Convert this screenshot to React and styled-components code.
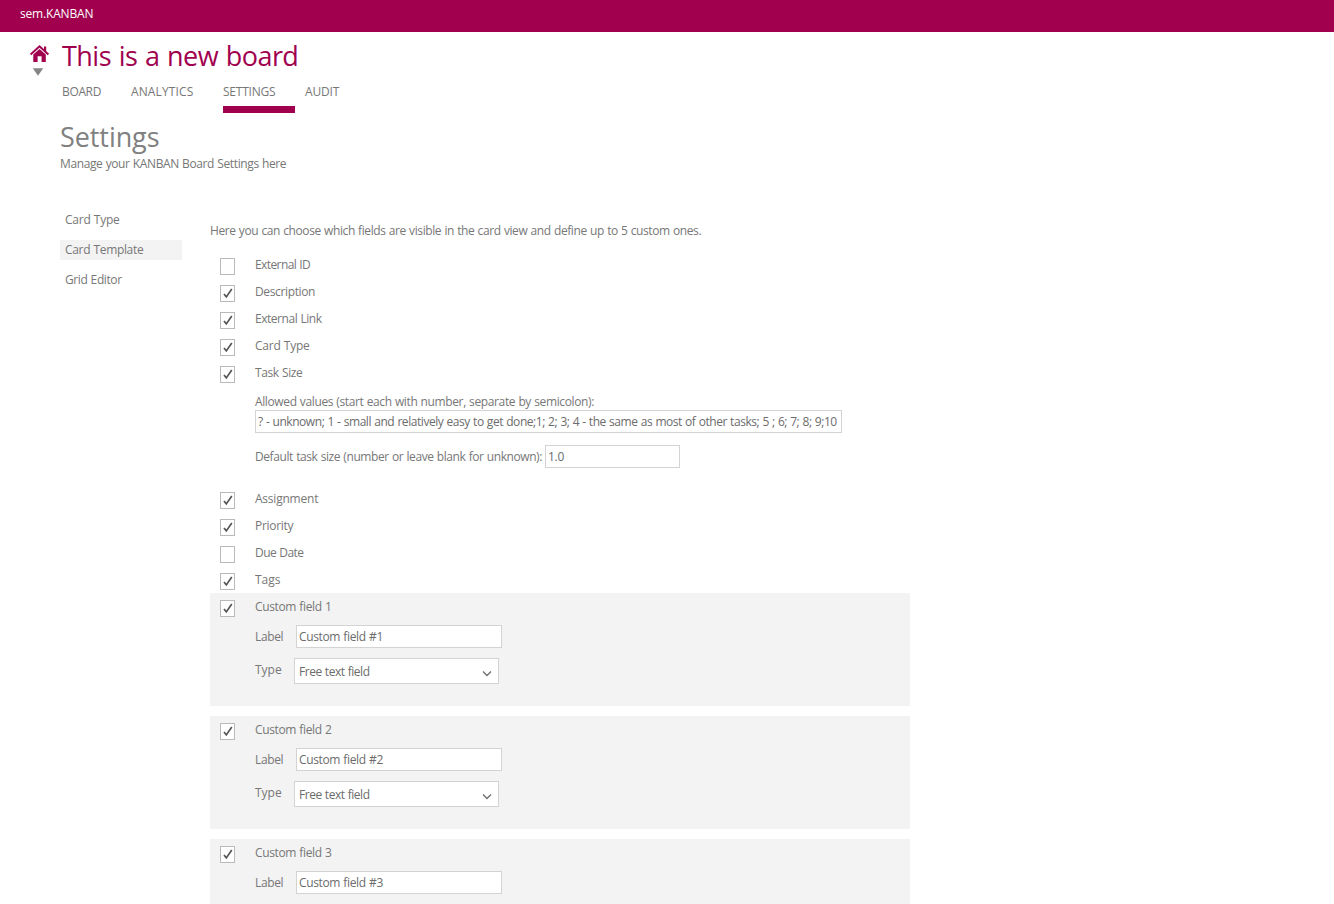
import React from "react";
import styled, { createGlobalStyle } from "styled-components";

const brand = "#a0004e";

const GlobalStyle = createGlobalStyle`
  * { box-sizing: border-box; }
  html, body { margin: 0; height: 904px; overflow: hidden; background: #fff; }
  body { font: 12px/15px "Open Sans", "Noto Sans", sans-serif; color: #777; }
`;

const Text = styled.span`
  white-space: pre;
  letter-spacing: ${(p) => p.$ls || 0}px;
  word-spacing: ${(p) => p.$ws ?? 0.5}px;
`;

const TopBar = styled.header`
  height: 32px;
  padding: 6px 20px;
  background: ${brand};
  color: #fff;
`;

const BoardHeader = styled.div`
  display: flex;
  padding: 8px 0 0 29px;
  height: 90px;
`;

const HomeColumn = styled.div`
  width: 33px;
  padding-top: 4px;

  svg {
    display: block;
  }
`;

const Title = styled.h1`
  margin: 0;
  height: 32px;
  font-size: 27px;
  line-height: 31px;
  font-weight: 400;
  color: ${brand};
`;

const Tabs = styled.nav`
  display: flex;
  padding-top: 12px;
`;

const Tab = styled.a`
  height: 29px;
  width: ${(p) => p.$w}px;
  margin-right: ${(p) => p.$gap}px;
  border-bottom: 7px solid ${(p) => (p.$active ? brand : "transparent")};
`;

const PageHead = styled.section`
  padding-left: 60px;
  height: 88px;
`;

const Heading = styled.h2`
  margin: 0;
  height: 34px;
  font-size: 27px;
  line-height: 29px;
  font-weight: 400;
  color: #808080;
`;

const Columns = styled.div`
  display: flex;
  padding-left: 60px;
`;

const SideNav = styled.ul`
  list-style: none;
  margin: 0;
  padding: 0;
  width: 122px;
  display: flex;
  flex-direction: column;
  gap: 10px;
`;

const SideItem = styled.li`
  height: 20px;
  padding: 2px 5px;
  background: ${(p) => (p.$active ? "#f3f3f3" : "transparent")};
`;

const Main = styled.main`
  margin-left: 28px;
  width: 700px;
  padding-top: 13px;
`;

const Intro = styled.p`
  margin: 0;
  height: 28px;
`;

const Row = styled.label`
  display: flex;
  height: 27px;
  padding: 7px 0 0 10px;
`;

const Check = styled.span`
  width: 15px;
  height: 17px;
  margin-right: 20px;
  border: 1px solid #bababa;
  background: #fff;

  svg {
    display: block;
  }
`;

const RowLabel = styled.span`
  margin-top: -1px;
`;

const SizeOptions = styled.div`
  height: 99px;
  padding: 8px 0 0 45px;
`;

const OptionCaption = styled.div`
  height: 16px;
`;

const Input = styled.input`
  display: block;
  width: ${(p) => p.$w}px;
  height: 23px;
  padding: 0 2px 1px;
  border: 1px solid #d3d3d3;
  border-radius: 0;
  outline: none;
  background: #fff;
  color: #6c6c6c;
  font: inherit;
  letter-spacing: ${(p) => p.$ls}px;
  word-spacing: 0.5px;
`;

const DefaultLine = styled.div`
  display: flex;
  margin-top: 12px;
`;

const InlineLabel = styled.span`
  width: ${(p) => p.$w}px;
  padding-top: 4px;
`;

const Panel = styled.section`
  height: ${(p) => p.$h}px;
  margin-bottom: ${(p) => p.$gap}px;
  background: #f3f3f3;
`;

const FieldLine = styled.div`
  display: flex;
  padding: ${(p) => p.$top}px 0 0 45px;
`;

const Select = styled.button`
  display: flex;
  align-items: flex-start;
  justify-content: space-between;
  width: 205px;
  height: 26px;
  padding: 5px 6px 0 4px;
  border: 1px solid #d3d3d3;
  background: #fff;
  color: #6c6c6c;
  font: inherit;

  svg {
    margin-top: 5px;
  }
`;

const Tick = () => (
  <svg width="13" height="15" viewBox="0 0 13 15" fill="none" stroke="#555" strokeWidth="1.7">
    <path d="M3 8 L5.3 10.9 L10.8 3" />
  </svg>
);

const Chevron = () => (
  <svg width="10" height="10" viewBox="0 0 10 10" fill="none" stroke="#707070" strokeWidth="1.4">
    <path d="M1 2.4 L5 6.4 L9 2.4" />
  </svg>
);

const HomeIcon = () => (
  <svg width="21" height="20" viewBox="0 0 21 20">
    <path d="M1.6 10.4 L10.5 2.3 L19.4 10.4" fill="none" stroke={brand} strokeWidth="2" />
    <path d="M15 2.6 H17.2 V8 L15 6 Z" fill={brand} />
    <path d="M10.5 4.9 L16.8 10.6 V18 H12.6 V12.2 H8.6 V18 H4.3 V10.6 Z" fill={brand} />
  </svg>
);

const DownTriangle = () => (
  <svg width="21" height="14" viewBox="0 0 21 14">
    <path d="M3.8 4.2 H14.2 L9 11.8 Z" fill="#858585" />
  </svg>
);

const Field = ({ name, checked, ls }) => (
  <Row>
    <Check>{checked && <Tick />}</Check>
    <RowLabel>
      <Text $ls={ls}>{name}</Text>
    </RowLabel>
  </Row>
);

const CustomField = ({ n, type }) => (
  <Panel $h={type ? 113 : 65} $gap={type ? 10 : 0}>
    <Field name={`Custom field ${n}`} checked ls={-0.36} />
    <FieldLine $top={5}>
      <InlineLabel $w={41}>
        <Text $ls={-0.35}>Label</Text>
      </InlineLabel>
      <Input $w={206} $ls={-0.355} defaultValue={`Custom field #${n}`} />
    </FieldLine>
    {type && (
      <FieldLine $top={10}>
        <InlineLabel $w={39}>
          <Text $ls={0}>Type</Text>
        </InlineLabel>
        <Select type="button">
          <Text $ls={-0.47}>{type}</Text>
          <Chevron />
        </Select>
      </FieldLine>
    )}
  </Panel>
);

const tabs = [
  { name: "BOARD", w: 39, gap: 30, ls: -0.35 },
  { name: "ANALYTICS", w: 62, gap: 30, ls: 0.12 },
  { name: "SETTINGS", w: 72, gap: 10, ls: -0.22 },
  { name: "AUDIT", w: 34, gap: 0, ls: -0.18 },
];

const fieldsBefore = [
  { name: "External ID", ls: -0.59 },
  { name: "Description", ls: -0.36, checked: true },
  { name: "External Link", ls: -0.46, checked: true },
  { name: "Card Type", ls: -0.25, checked: true },
  { name: "Task Size", ls: -0.38, checked: true },
];

const fieldsAfter = [
  { name: "Assignment", ls: -0.22, checked: true },
  { name: "Priority", ls: -0.29, checked: true },
  { name: "Due Date", ls: -0.53 },
  { name: "Tags", ls: -0.03, checked: true },
];

export default function App() {
  return (
    <>
      <GlobalStyle />
      <TopBar>
        <Text $ls={-0.18}>sem.KANBAN</Text>
      </TopBar>
      <BoardHeader>
        <HomeColumn>
          <HomeIcon />
          <DownTriangle />
        </HomeColumn>
        <div>
          <Title>
            <Text $ls={-0.54} $ws={1.2}>
              This is a new board
            </Text>
          </Title>
          <Tabs>
            {tabs.map((t) => (
              <Tab key={t.name} $w={t.w} $gap={t.gap} $active={t.name === "SETTINGS"}>
                <Text $ls={t.ls}>{t.name}</Text>
              </Tab>
            ))}
          </Tabs>
        </div>
      </BoardHeader>
      <PageHead>
        <Heading>
          <Text $ls={-0.08}>Settings</Text>
        </Heading>
        <Text $ls={-0.385}>Manage your KANBAN Board Settings here</Text>
      </PageHead>
      <Columns>
        <SideNav>
          <SideItem>
            <Text $ls={-0.25}>Card Type</Text>
          </SideItem>
          <SideItem $active>
            <Text $ls={-0.33}>Card Template</Text>
          </SideItem>
          <SideItem>
            <Text $ls={-0.4}>Grid Editor</Text>
          </SideItem>
        </SideNav>
        <Main>
          <Intro>
            <Text $ls={-0.4}>
              Here you can choose which fields are visible in the card view and define up to 5 custom ones.
            </Text>
          </Intro>
          {fieldsBefore.map((f) => (
            <Field key={f.name} {...f} />
          ))}
          <SizeOptions>
            <OptionCaption>
              <Text $ls={-0.378}>Allowed values (start each with number, separate by semicolon):</Text>
            </OptionCaption>
            <Input
              $w={587}
              $ls={-0.445}
              defaultValue="? - unknown; 1 - small and relatively easy to get done;1; 2; 3; 4 - the same as most of other tasks; 5 ; 6; 7; 8; 9;10"
            />
            <DefaultLine>
              <InlineLabel $w={290}>
                <Text $ls={-0.413}>Default task size (number or leave blank for unknown):</Text>
              </InlineLabel>
              <Input $w={135} $ls={-0.25} defaultValue="1.0" />
            </DefaultLine>
          </SizeOptions>
          {fieldsAfter.map((f) => (
            <Field key={f.name} {...f} />
          ))}
          <CustomField n={1} type="Free text field" />
          <CustomField n={2} type="Free text field" />
          <CustomField n={3} />
        </Main>
      </Columns>
    </>
  );
}
